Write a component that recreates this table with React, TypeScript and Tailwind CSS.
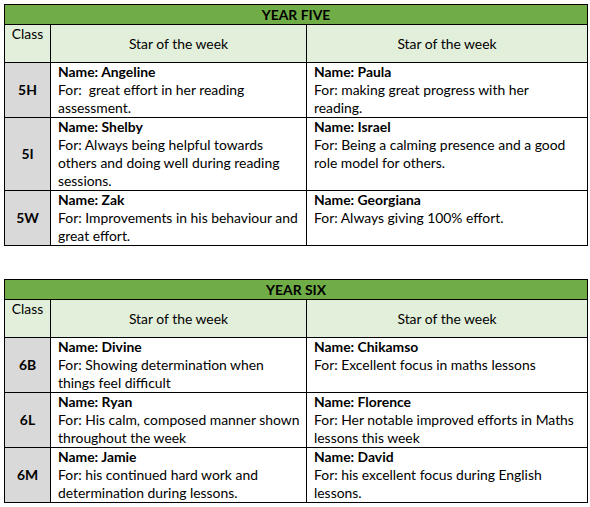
type Entry = { name: string; lines: string[] };
type Row = { cls: string; left: Entry; right: Entry };

const yearFive: Row[] = [
  {
    cls: '5H',
    left: { name: 'Angeline', lines: ['For:  great effort in her reading', 'assessment.'] },
    right: { name: 'Paula', lines: ['For: making great progress with her', 'reading.'] },
  },
  {
    cls: '5I',
    left: {
      name: 'Shelby',
      lines: ['For: Always being helpful towards', 'others and doing well during reading', 'sessions.'],
    },
    right: { name: 'Israel', lines: ['For: Being a calming presence and a good', 'role model for others.'] },
  },
  {
    cls: '5W',
    left: { name: 'Zak', lines: ['For: Improvements in his behaviour and', 'great effort.'] },
    right: { name: 'Georgiana', lines: ['For: Always giving 100% effort.'] },
  },
];

const yearSix: Row[] = [
  {
    cls: '6B',
    left: { name: 'Divine', lines: ['For: Showing determination when', 'things feel difficult'] },
    right: { name: 'Chikamso', lines: ['For: Excellent focus in maths lessons'] },
  },
  {
    cls: '6L',
    left: { name: 'Ryan', lines: ['For: His calm, composed manner shown', 'throughout the week'] },
    right: { name: 'Florence', lines: ['For: Her notable improved efforts in Maths', 'lessons this week'] },
  },
  {
    cls: '6M',
    left: { name: 'Jamie', lines: ['For: his continued hard work and', 'determination during lessons.'] },
    right: { name: 'David', lines: ['For: his excellent focus during English', 'lessons.'] },
  },
];

function EntryCell({ entry }: { entry: Entry }) {
  return (
    <td className="border border-black align-top pl-[7px] pr-1 overflow-hidden">
      <div className="font-bold">Name: {entry.name}</div>
      {entry.lines.map((l, i) => (
        <div key={i} className="whitespace-pre">{l}</div>
      ))}
    </td>
  );
}

function YearTable({ title, rows }: { title: string; rows: Row[] }) {
  return (
    <table className="border-collapse table-fixed w-[583px] border border-black">
      <colgroup>
        <col className="w-[46px]" />
        <col className="w-[256px]" />
        <col className="w-[281px]" />
      </colgroup>
      <tbody>
        <tr className="bg-[#70ad47]">
          <td colSpan={3} className="border border-black text-center font-bold h-[20px] leading-[18px]">
            {title}
          </td>
        </tr>
        <tr className="bg-[#e2efda] h-[38px]">
          <td className="border border-black text-center align-top">Class</td>
          <td className="border border-black text-center align-middle">Star of the week</td>
          <td className="border border-black text-center align-middle">Star of the week</td>
        </tr>
        {rows.map((r) => (
          <tr key={r.cls}>
            <td className="border border-black bg-[#d9d9d9] text-center align-middle font-bold">{r.cls}</td>
            <EntryCell entry={r.left} />
            <EntryCell entry={r.right} />
          </tr>
        ))}
      </tbody>
    </table>
  );
}

export default function App() {
  return (
    <div
      className="w-[590px] h-[507px] bg-white text-black text-[13.9px] leading-[18px] pt-[4px] pl-[4px]"
      style={{ fontFamily: 'Lato, "Liberation Sans", sans-serif' }}
    >
      <YearTable title="YEAR FIVE" rows={yearFive} />
      <div className="h-[33px]" />
      <YearTable title="YEAR SIX" rows={yearSix} />
    </div>
  );
}
